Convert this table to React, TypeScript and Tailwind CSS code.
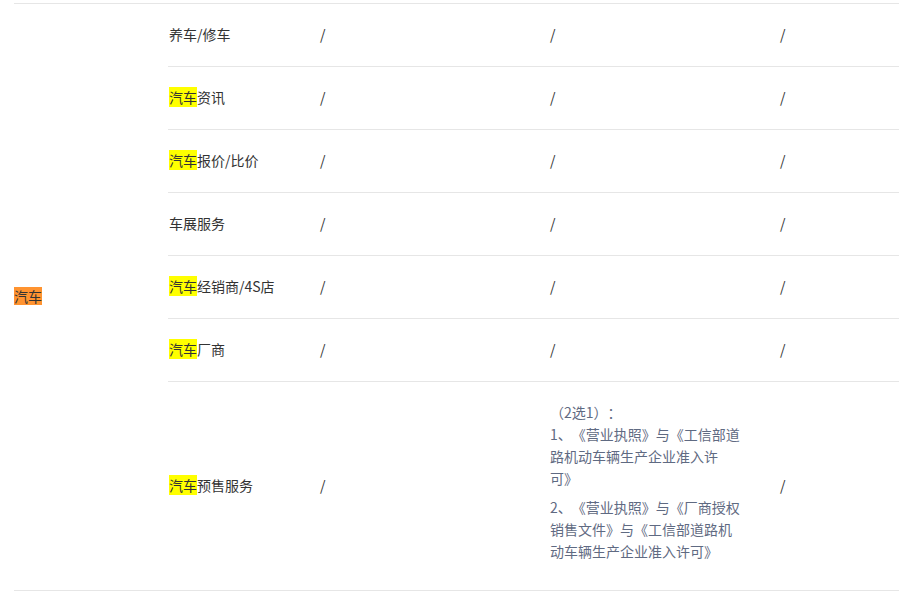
import React from "react";

type Row = {
  hl?: boolean;
  name: string;
  tall?: boolean;
};

const rows: Row[] = [
  { name: "养车/修车" },
  { hl: true, name: "资讯" },
  { hl: true, name: "报价/比价" },
  { name: "车展服务" },
  { hl: true, name: "经销商/4S店" },
  { hl: true, name: "厂商" },
  { hl: true, name: "预售服务", tall: true },
];

const Slash = () => <span>/</span>;

const PresaleNote = () => (
  <div className="w-[192px] pb-[8px] text-[14px] leading-[22px] text-[#5f6a82]">
    <p>
      （2选1）：
      <br />
      1、《营业执照》与《工信部道路机动车辆生产企业准入许可》
    </p>
    <p className="mt-[7px]">
      2、《营业执照》与《厂商授权销售文件》与《工信部道路机动车辆生产企业准入许可》
    </p>
  </div>
);

export default function App() {
  return (
    <div
      className="min-h-[593px] bg-white pt-[3px] pl-[14px] text-[14px] text-[#333] [text-spacing-trim:space-all]"
      style={{ fontFamily: '"Noto Sans CJK SC", "Microsoft YaHei", sans-serif' }}
    >
      <div className="grid grid-cols-[154px_151px_230px_230px_1fr] border-t border-[#e6e6e6]">
        <div className="row-span-7 flex items-center border-b border-[#e6e6e6] pb-[2px]">
          <span className="bg-[#ff9330] leading-[18px]">汽车</span>
        </div>
        {rows.map((r, i) => {
          const cell = `flex items-center border-b border-[#e6e6e6] pb-[2px] pl-px ${
            r.tall ? "h-[209px]" : "h-[63px]"
          }`;
          return (
            <React.Fragment key={i}>
              <div className={cell}>
                <span className="leading-[18px]">
                  {r.hl ? <span className="bg-[#ffff00]">汽车</span> : null}
                  {r.name}
                </span>
              </div>
              <div className={cell}>
                <Slash />
              </div>
              <div className={cell}>
                {r.tall ? <PresaleNote /> : <Slash />}
              </div>
              <div className={cell}>
                <Slash />
              </div>
            </React.Fragment>
          );
        })}
      </div>
    </div>
  );
}
